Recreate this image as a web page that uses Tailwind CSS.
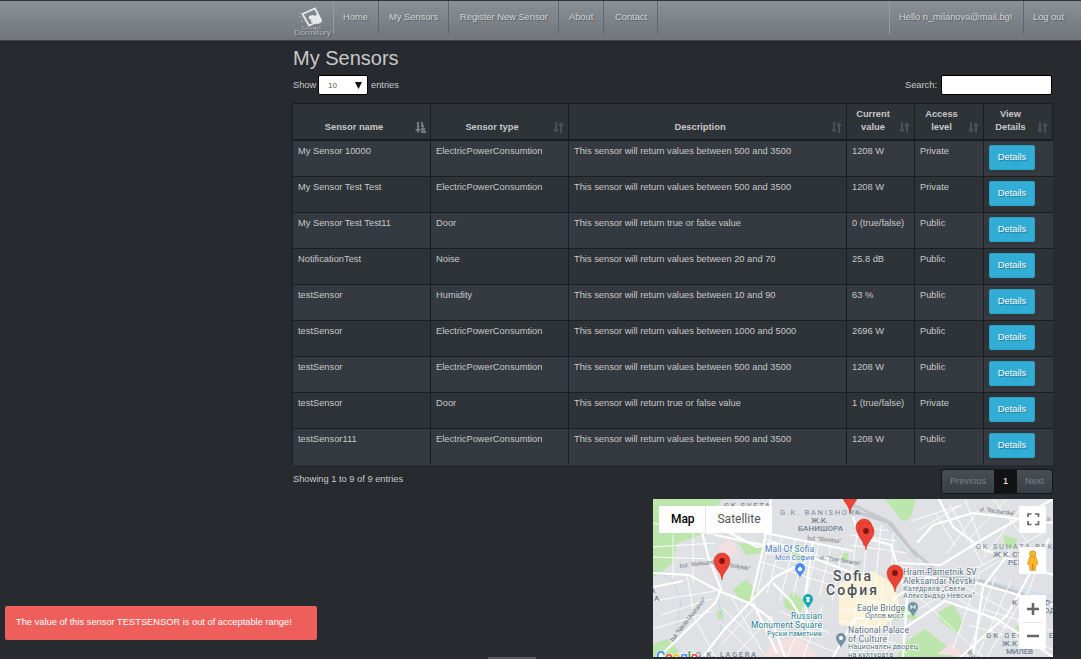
<!DOCTYPE html>
<html lang="en"><head><meta charset="utf-8"><title>My Sensors</title>
<script src="https://cdn.jsdelivr.net/npm/@tailwindcss/browser@4"></script></head>
<body class="w-[1081px] h-[659px] overflow-hidden relative bg-[#272b30] text-[#c8c8c8] text-[9.3px] leading-[13px] font-['Liberation_Sans',sans-serif]">
<nav class="h-[41px] border-t border-b border-t-[#303439] border-b-[#3d4247] bg-linear-to-b from-[#8b9096] to-[#6f767c] flex text-[#d2d4d6] [text-shadow:1px_1px_1px_rgba(0,0,0,0.3)]">
  <div class="ml-[292px] w-[42px] h-[33px] border-r border-[#999da1]">
    <svg width="41" height="39" viewBox="0 0 41 39" class="block overflow-visible">
      <path d="M10.500 13l12.500-5.500 6 11.500-12 5.500z" fill="none" stroke="#e8e9ea" stroke-width="1.800"/>
      <path d="M17 15l4-1 2 1 2-2 3 2 0 3 2 3-4 2-5-1-3-2 2-1-3-1z" fill="#e8e9ea"/>
      <path d="M7 12h3M7 16h4M9 20h4" stroke="#a7abb0" stroke-dasharray="2 1"/>
      <text x="9" y="28.500" font-size="6" textLength="20" lengthAdjust="spacingAndGlyphs" fill="#afb3b7">Smart</text>
      <text x="2" y="34" font-size="6.500" textLength="37" lengthAdjust="spacingAndGlyphs" fill="#b6babd">Dormitory</text>
    </svg>
  </div>
  <a class="w-[45px] h-[33px] pt-[10px] pl-[9px] border-r border-[#62676d] whitespace-nowrap">Home</a>
  <a class="w-[70px] h-[33px] pt-[10px] pl-[10px] border-r border-[#62676d] whitespace-nowrap">My Sensors</a>
  <a class="w-[110px] h-[33px] pt-[10px] pl-[11px] border-r border-[#62676d] whitespace-nowrap">Register New Sensor</a>
  <a class="w-[45px] h-[33px] pt-[10px] pl-[10px] border-r border-[#62676d] whitespace-nowrap">About</a>
  <a class="w-[54px] h-[33px] pt-[10px] pl-[11px] border-r border-[#62676d] whitespace-nowrap">Contact</a>
  <a class="ml-auto w-[135px] h-[33px] pt-[10px] pl-[9px] border-l border-r border-l-[#999da1] border-r-[#62676d] whitespace-nowrap">Hello n_milanova@mail.bg!</a>
  <a class="w-[57px] h-[33px] pt-[10px] pl-[9px] whitespace-nowrap">Log out</a>
</nav>
<main class="ml-[293px] w-[760px]">
  <h1 class="h-[34px] pt-[5px] text-[20px] leading-[24px]">My Sensors</h1>
  <div class="h-[28px] flex items-start">
    <span class="w-[25px] pt-[4px]">Show</span>
    <div class="w-[50px] h-[20px] bg-white border border-black rounded-[2px] flex items-center justify-between pl-[9px] pr-[5px] text-[8px] text-[#555]"><span>10</span>
      <svg width="7" height="7" viewBox="0 0 7 7"><path d="M0 0h7L3.5 7z" fill="#111"/></svg></div>
    <span class="pl-[3px] pt-[4px]">entries</span>
    <span class="ml-auto pt-[4px] pr-[4px]">Search:</span>
    <div class="w-[111px] h-[20px] mr-[1px] bg-white border border-black rounded-[2px]"></div>
  </div>
  <table class="w-[761px] -ml-px table-fixed border-separate border-spacing-0">
    <colgroup><col class="w-[138px]"><col class="w-[138px]"><col class="w-[278px]"><col class="w-[68px]"><col class="w-[69px]"><col class="w-[70px]"></colgroup>
    <thead><tr id="head" class="bg-[#2e3338] h-[38px]"></tr></thead>
    <tbody id="rows"></tbody>
  </table>
  <div class="flex justify-between">
    <span class="pt-[8px]">Showing 1 to 9 of 9 entries</span>
    <div class="mt-[4px] mb-[5px] w-[112px] h-[25px] flex border border-[#15181a] rounded-[3px] overflow-hidden bg-linear-to-b from-[#484e55] to-[#3a3f44] leading-[23px] text-center text-[#7a8288]">
      <span class="w-[52px]">Previous</span><span class="w-[23px] bg-[#101214] text-white">1</span><span class="flex-1">Next</span></div>
  </div>
  <svg class="block ml-[360px]" width="400" height="158" viewBox="0 0 400 158" font-family="Roboto, sans-serif">
    <rect width="400" height="158" fill="#e0e1e4"/>
    <g fill="#bce6ab">
      <path d="M0 0h50l-6 22 4 14-24 8-4 20-20 15zM80 90l14-10 9 14-7 11-10-5zM130 102l10-9 12 9-5 12-15-5zM34 0h35l-5 8h-20zM135 52l12-6 6 8-8 8zM64 112l6-2v9l-5 2zM232 0h31l-6 20-8 2zM285 113l15-8 10 18-6 12-18-14zM260 138l12-8 28 22v6h-56l8-14zM0 145l14-5 12 12-3 6H0zM240 110l20-4 5 16-14-4-11 4zM350 36l14 4-2 10-10-4zM362 128l28-8v16l-20 2zM85 44l20 2 8 8-20 2zM188 54h7v7h-7z"/>
    </g>
    <path d="M186 84l34-12 22 14 6 26-20 18-42-4z" fill="#fbf2d8"/>
    <path d="M110 158l10-14 26-6 20 20zM64 48l14-8 8 16-12 2zM240 66l20 2-3 7-18-1zM284 155l15-12 12 15z" fill="#f4e0e0"/>
    <path d="M0 68l20 14 8 20-6 40M200 10l30 12 22 30 20 18 60 12 68 16M62 90l8 30-8 34" fill="none" stroke="#bdd9ee"/>
    <path d="M200 6l34 16 22 26 34 30M268 74l60 8 72 22M200 12l38 12 26 34" fill="none" stroke="#c6c8cb" stroke-width="3"/>
    <g fill="none" stroke="#fff">
      <path stroke-width=".9" d="M112 40l90 28M108 52l88 28M106 62l84 28M118 34l-14 60M130 36l-16 58M142 40l-15 62M154 38l-14 60M166 44l-13 52M178 48l-12 50M190 50l-11 52M0 24l64 12M0 48l62-4M0 58l60 2M20 36v44M40 32v52M0 102l62-10M8 116l50-16M0 130l60-18M68 108l30 28M68 124l32 30M76 94l34 60M102 108l-34 38M120 116l-40 42M34 76l8 44 20 38M126 112l50 22M132 132l52 22M154 110l-20 48M170 106l-20 52M200 26l36 6M198 36l46 6M198 46l56 8M206 20l-8 60M216 22l-6 56M228 26l-6 64M240 34l-2 62M196 98l60 10M190 110l64 6M186 122l50 8M192 134l50 10M206 86l-8 68M218 82l-8 76M230 86l-8 70M242 96l-10 62M264 32l44-26M258 22l50-16M282 14l20 32M296 4l34 62M312 0l20 54M328 8l-34 46M340 0l34 42M354 0l-40 42M370 6l-40 54M390 34l-68 36M266 110l80-48M290 90l64 40M302 82l60 34M326 76l-26 74M342 78l-28 80M358 82l-34 76M374 92l-40 66M264 96l66 62M330 110l70 22M316 126l84 24M386 64l-22 60"/>
      <path stroke-width="2.200" d="M0 74l36 2 30 16 30 12 22 16 14 38M48 30l8 30 12 30-6 14-56 54M58 24l46 24 16-4 80 30M118 0l-8 50-12 52-28 30-20 26M0 88l30-6M96 104l26-26 32-16M62 36l48 10M112 34l88 18M120 84l18 18 22 36M160 42l-8 56 4 30M100 104l24 50M200 18l8 20 30 8 16 52-4 60M246 64l42 2 42-26 70-40M240 100l34-22 50 6 76 22M264 44l16-18 40-12 80 10M250 130l42-28 52 18 56 38M286 0l14 28 30 22 70 26M180 158l22-38 56-6M396 40l-42 76-46 42M356 54l-26 34-10 70"/>
    </g>
    <g font-size="6" fill="#777c82">
      <text x="27" y="69" transform="rotate(-7 27 69)" textLength="35">bul. "Aleksand</text><text x="77" y="68" transform="rotate(10 77 68)" textLength="20">bolyiski"</text>
      <text x="154" y="41" transform="rotate(5 154 41)" textLength="34">bul. "Slivnitsa"</text><text x="166" y="60" transform="rotate(9 166 60)" textLength="42">ul. "Tsar Simeon"</text>
      <text x="20" y="143" transform="rotate(-52 20 143)" textLength="54">bul. "Nikola Mushanov"</text><text x="326" y="12" transform="rotate(7 326 12)" textLength="36">ul. "Rezbarska"</text><text x="384" y="28" transform="rotate(-28 384 28)">evska</text><text x="314" y="154" transform="rotate(38 314 154)">Boul</text>
    </g>
    <g fill="#7b8793" font-size="7.500">
      <text x="71" y="9" font-weight="500" textLength="46">GK SVETA</text><text x="127" y="16" textLength="80">G.K. BANISHORA</text>
      <text x="323" y="50" textLength="83">GK SUHATA REKA</text><text x="333" y="139" font-weight="500" textLength="74">GK GEO MILEV</text><text x="43" y="158" font-weight="500" textLength="60">G.K. LAGERA</text>
      <g font-weight="500" font-size="8" fill="#748294"><text x="158" y="24" textLength="17">Ж.К.</text><text x="145" y="32" textLength="45">БАНИШОРА</text><text x="340" y="58">Ж.К. СУ</text><text x="355" y="66">РЕКА</text><text x="359" y="106">K</text><text x="392" y="106">D</text><text x="391" y="114">ОД</text><text x="349" y="147">Ж.К</text><text x="353" y="155" textLength="27">МИЛЕВ</text><text x="-3" y="94">A</text><text x="1" y="102">А</text></g>
    </g>
    <g stroke="#fff" stroke-width="2" paint-order="stroke" stroke-opacity=".6">
      <g font-size="14" font-weight="500" fill="#4d5155"><text x="180" y="82" textLength="38">Sofia</text><text x="173" y="96" textLength="51">София</text></g>
      <g fill="#4e83c4"><text x="112" y="53" font-size="8.500" textLength="49">Mall Of Sofia</text><text x="122" y="61" font-size="7.500" textLength="39">Мол София</text></g>
      <g fill="#28838f"><text x="138" y="120" font-size="8.500" textLength="31">Russian</text><text x="98" y="129" font-size="8.500" textLength="71">Monument Square</text><text x="114" y="137" font-size="7.500" textLength="55">Руски паметник</text></g>
      <g fill="#5b7582" font-size="8.700"><text x="250" y="76" textLength="75">Hram-Pametnik SV.</text><text x="250" y="85" textLength="72">Aleksandar Nevski</text><text x="250" y="92" font-size="7.500" textLength="62">Катедрала „Свети</text><text x="250" y="99" font-size="7.500" textLength="72">Александър Невски“</text><text x="204" y="112" textLength="48">Eagle Bridge</text><text x="212" y="119" font-size="7.500" textLength="39">Орлов мост</text><text x="195" y="134" textLength="61">National Palace</text><text x="195" y="143" textLength="39">of Culture</text><text x="195" y="150" font-size="7.500" textLength="70">Национален дворец</text><text x="195" y="157.500" font-size="7.500" textLength="45">на културата</text></g>
    </g>
    <defs><path id="poi" d="M0 8C-1 4-5 2-5-2a5 5 0 0110 0C5 2 1 4 0 8z"/>
    <g id="pin"><path d="M0 18C-1 9-8 7-8-1a8 8 0 0116 0C8 7 1 9 0 18z" fill="#ea4335" stroke="#c93427" stroke-width=".5"/><circle cy="-1" r="2.9" fill="#7f1511"/></g></defs>
    <use href="#poi" x="147" y="71" fill="#4b8df0"/><path d="M145 69h4v3h-4zM146 69v-1h2v1" fill="#fff"/>
    <use href="#poi" x="155" y="102" fill="#12aab8"/><path d="M153 98h4v2h-1v1l1 2h-4l1-2v-1h-1z" fill="#fff"/>
    <use href="#poi" x="260" y="110" fill="#7393a5"/><path d="M258 106v4M262 106v4M258 108h4" stroke="#fff"/>
    <use href="#poi" x="188" y="141" fill="#7393a5"/><circle cx="188" cy="139" r="2" fill="#fff"/>
    <use href="#pin" x="69" y="63"/><use href="#pin" x="197" y="-4"/><use href="#pin" x="211" y="29"/><use href="#pin" x="213" y="33"/><use href="#pin" x="242" y="75"/>
    <text y="163" x="3" font-size="14" textLength="42" font-weight="500" stroke="#fff" stroke-width="1" paint-order="stroke"><tspan fill="#4285f4">G</tspan><tspan fill="#ea4335">o</tspan><tspan fill="#fbbc05">o</tspan><tspan fill="#4285f4">g</tspan><tspan fill="#34a853">l</tspan><tspan fill="#ea4335">e</tspan></text>
    <g fill="#fff"><rect x="6" y="7" width="113" height="27" rx="1"/><rect x="366" y="7" width="27" height="27" rx="1"/><rect x="366" y="48" width="27" height="27" rx="1"/><rect x="366" y="96" width="27" height="54" rx="1"/></g>
    <path d="M52.500 7v27M370 123.500h19" stroke="#e6e6e6"/>
    <g font-size="12"><text x="18" y="24" font-weight="500" textLength="23.500" fill="#000">Map</text><text x="64.500" y="24" textLength="43" fill="#565656">Satellite</text></g>
    <g fill="none" stroke="#666"><path stroke-width="1.700" d="M375 18v-3h3.500M382 15h3.500v3M385.500 22v3.500h-3.500M378.500 25.500h-3.500v-3.500"/><path stroke-width="2.500" d="M374 110h12M380 104v12M374 137h12"/></g>
    <circle cx="379.700" cy="55" r="3.200" fill="#f5b52e" stroke="#b98527" stroke-width=".6"/><path d="M376.500 58h6.500l2 7-2 1-.7 5.500h-5.200l-.7-5.500-2-1z" fill="#f9b62b" stroke="#d18d1c" stroke-width=".6"/><path d="M379.700 65v6" stroke="#c77f16"/>
  </svg>
</main>
<div class="absolute left-[488px] top-[657px] w-[48px] h-[2px] bg-[#55595d]"></div>
<div class="absolute left-[5px] top-[606px] w-[312px] h-[34px] rounded-[2px] bg-[#ee5f5b] text-white pl-[11px] pt-[10px] whitespace-nowrap">The value of this sensor TESTSENSOR is out of acceptable range!</div>
<script>
const heads=['Sensor name','Sensor type','Description','Current<br>value','Access<br>level','View<br>Details'];
const down='<path d="M2 0h2v7h2l-3 4-3-4h2z"/>';
document.getElementById('head').innerHTML=heads.map((h,i)=>`<th class="relative align-bottom font-bold p-0 pb-[5px] pr-[15px] border-t border-l border-b-2 border-[#1b1e21] last:border-r">${h}<svg class="absolute right-[4px] bottom-[6px]" width="11" height="11" viewBox="0 0 11 11" fill="${i?'#4b5055':'#777b80'}">${down}${i?'<path d="M7 11h2V4h2L8 0 5 4h2z"/>':'<path d="M6 0h2v3H6zM6 3h3v2.500H6zM6 6h4v2.200H6zM6 8.600h5V11H6z"/>'}</svg></th>`).join('');
const E='ElectricPowerConsumtion',B=(a,b)=>`This sensor will return values between ${a} and ${b}`,T='This sensor will return true or false value';
const data=[['My Sensor 10000',E,B(500,3500),'1208 W','Private'],['My Sensor Test Test',E,B(500,3500),'1208 W','Private'],['My Sensor Test Test11','Door',T,'0 (true/false)','Public'],['NotificationTest','Noise',B(20,70),'25.8 dB','Public'],['testSensor','Humidity',B(10,90),'63 %','Public'],['testSensor',E,B(1000,5000),'2696 W','Public'],['testSensor',E,B(500,3500),'1208 W','Public'],['testSensor','Door',T,'1 (true/false)','Private'],['testSensor111',E,B(500,3500),'1208 W','Public']];
document.getElementById('rows').innerHTML=data.map((r,i)=>`<tr class="group h-[36px] odd:bg-[#353a41] even:bg-[#2e3338]">${r.map(c=>`<td class="align-top p-0 pl-[5px] pt-[4px] whitespace-nowrap border-l border-b border-[#1b1e21] group-last:border-b-transparent">${c}</td>`).join('')}<td class="align-top p-0 pl-[5px] pt-[4px] border-l border-b border-[#1b1e21] group-last:border-b-transparent"><a class="block w-[46px] h-[25px] rounded-[2px] bg-[#32aed6] border border-[#2aa3ca] text-white text-center leading-[22px] [text-shadow:1px_1px_1px_rgba(0,0,0,0.35)]">Details</a></td></tr>`).join('');
</script>
</body></html>
